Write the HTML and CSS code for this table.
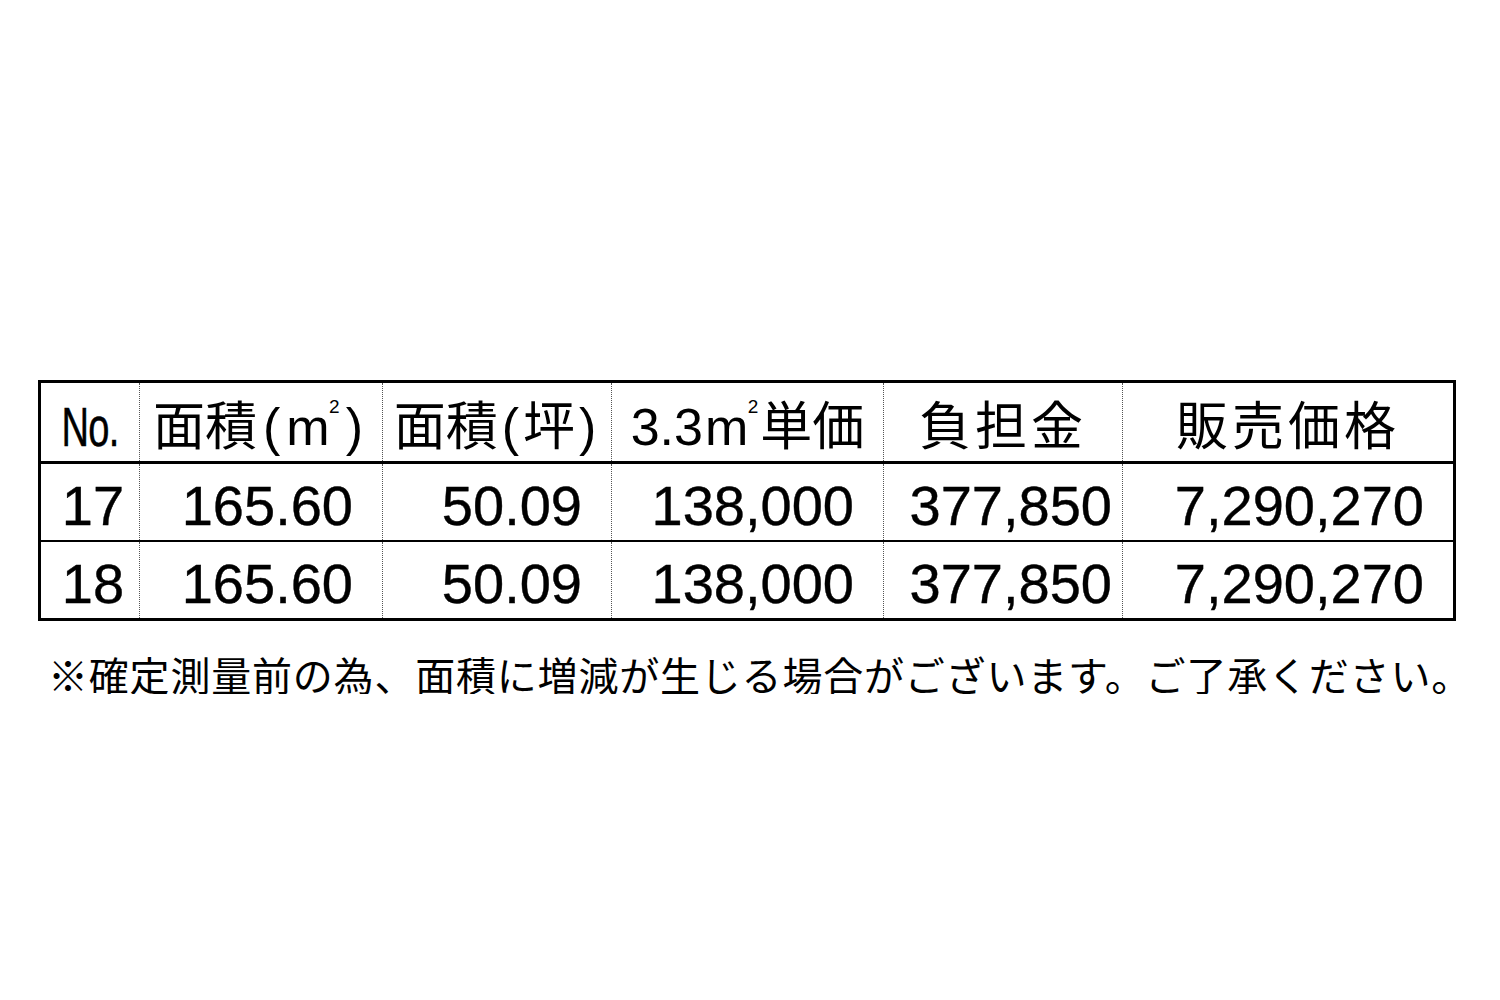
FILE: index.html
```html
<!DOCTYPE html>
<html lang="ja">
<head>
<meta charset="utf-8">
<title>販売価格表</title>
<link rel="stylesheet" href="styles.css">
</head>
<body>
<div class="page">
  <table class="price">
    <colgroup>
      <col class="w1"><col class="w2"><col class="w3"><col class="w4"><col class="w5"><col class="w6">
    </colgroup>
    <thead>
      <tr>
        <th><span class="no">No.</span></th>
        <th>面積<span class="p">(</span><span class="m2">m<span class="sq">2</span></span><span class="p">)</span></th>
        <th>面積<span class="p2">(</span>坪<span class="p2">)</span></th>
        <th>3.3<span class="m2 wide">m<span class="sq">2</span></span>単価</th>
        <th class="sp">負担金</th>
        <th class="sp">販売価格</th>
      </tr>
    </thead>
    <tbody>
      <tr>
        <td class="id">17</td>
        <td class="num">165.60</td>
        <td class="num">50.09</td>
        <td class="num">138,000</td>
        <td class="num tight">377,850</td>
        <td class="num">7,290,270</td>
      </tr>
      <tr>
        <td class="id">18</td>
        <td class="num">165.60</td>
        <td class="num">50.09</td>
        <td class="num">138,000</td>
        <td class="num tight">377,850</td>
        <td class="num">7,290,270</td>
      </tr>
    </tbody>
  </table>
  <p class="note">※確定測量前の為、面積に増減が生じる場合がございます。ご了承ください。</p>
</div>
</body>
</html>
```

FILE: styles.css
```css
html, body {
  margin: 0;
  padding: 0;
  background: #fff;
}
body {
  color: #000;
  font-family: "Liberation Sans", "Noto Sans CJK JP", sans-serif;
}
.page {
  padding: 380px 0 0 38px;
}
.price {
  border-collapse: collapse;
  table-layout: fixed;
  width: 1415px;
  border: 3px solid #000;
}
.w1 { width: 100px; }
.w2 { width: 243px; }
.w3 { width: 229px; }
.w4 { width: 272px; }
.w5 { width: 239px; }
.w6 { width: 332px; }

.price th,
.price td {
  padding: 0;
  border-left: 1px dotted #555;
  border-right: 1px dotted #555;
  white-space: nowrap;
  overflow: visible;
}
.price th {
  height: 68px;
  font-size: 52px;
  font-weight: normal;
  text-align: center;
  line-height: 1;
  padding-top: 10px;
  border-bottom: 3px solid #000;
}
.price th.sp {
  letter-spacing: 4px;
}
.price td {
  height: 68px;
  font-size: 56px;
  line-height: 1;
  padding-top: 8px;
  border-bottom: 2px solid #000;
  -webkit-text-stroke: 0.4px #000;
}
.price tbody tr:last-child td {
  height: 68px;
  border-bottom: 3px solid #000;
}
.no {
  display: inline-block;
  font-size: 56px;
  transform: scaleX(0.68);
  letter-spacing: -1px;
  -webkit-text-stroke: 0.5px #000;
}
.p {
  display: inline-block;
  margin: 0 6px;
}
.p2 {
  display: inline-block;
  margin: 0 4px;
}
.m2 {
  position: relative;
  display: inline-block;
  padding-right: 10px;
}
.m2.wide {
  margin: 0 2px 0 2px;
}
.sq {
  position: absolute;
  right: 0;
  top: -4px;
  font-size: 19px;
  line-height: 1;
}
.id {
  text-align: center;
  padding-left: 6px !important;
}
.num {
  text-align: right;
  padding-right: 29px !important;
}
.num.tight {
  padding-right: 10px !important;
}
.note {
  margin: 33px 0 0 10px;
  font-size: 40px;
  line-height: 1;
  letter-spacing: 0.8px;
  font-family: "Noto Sans CJK JP", sans-serif;
}
```
